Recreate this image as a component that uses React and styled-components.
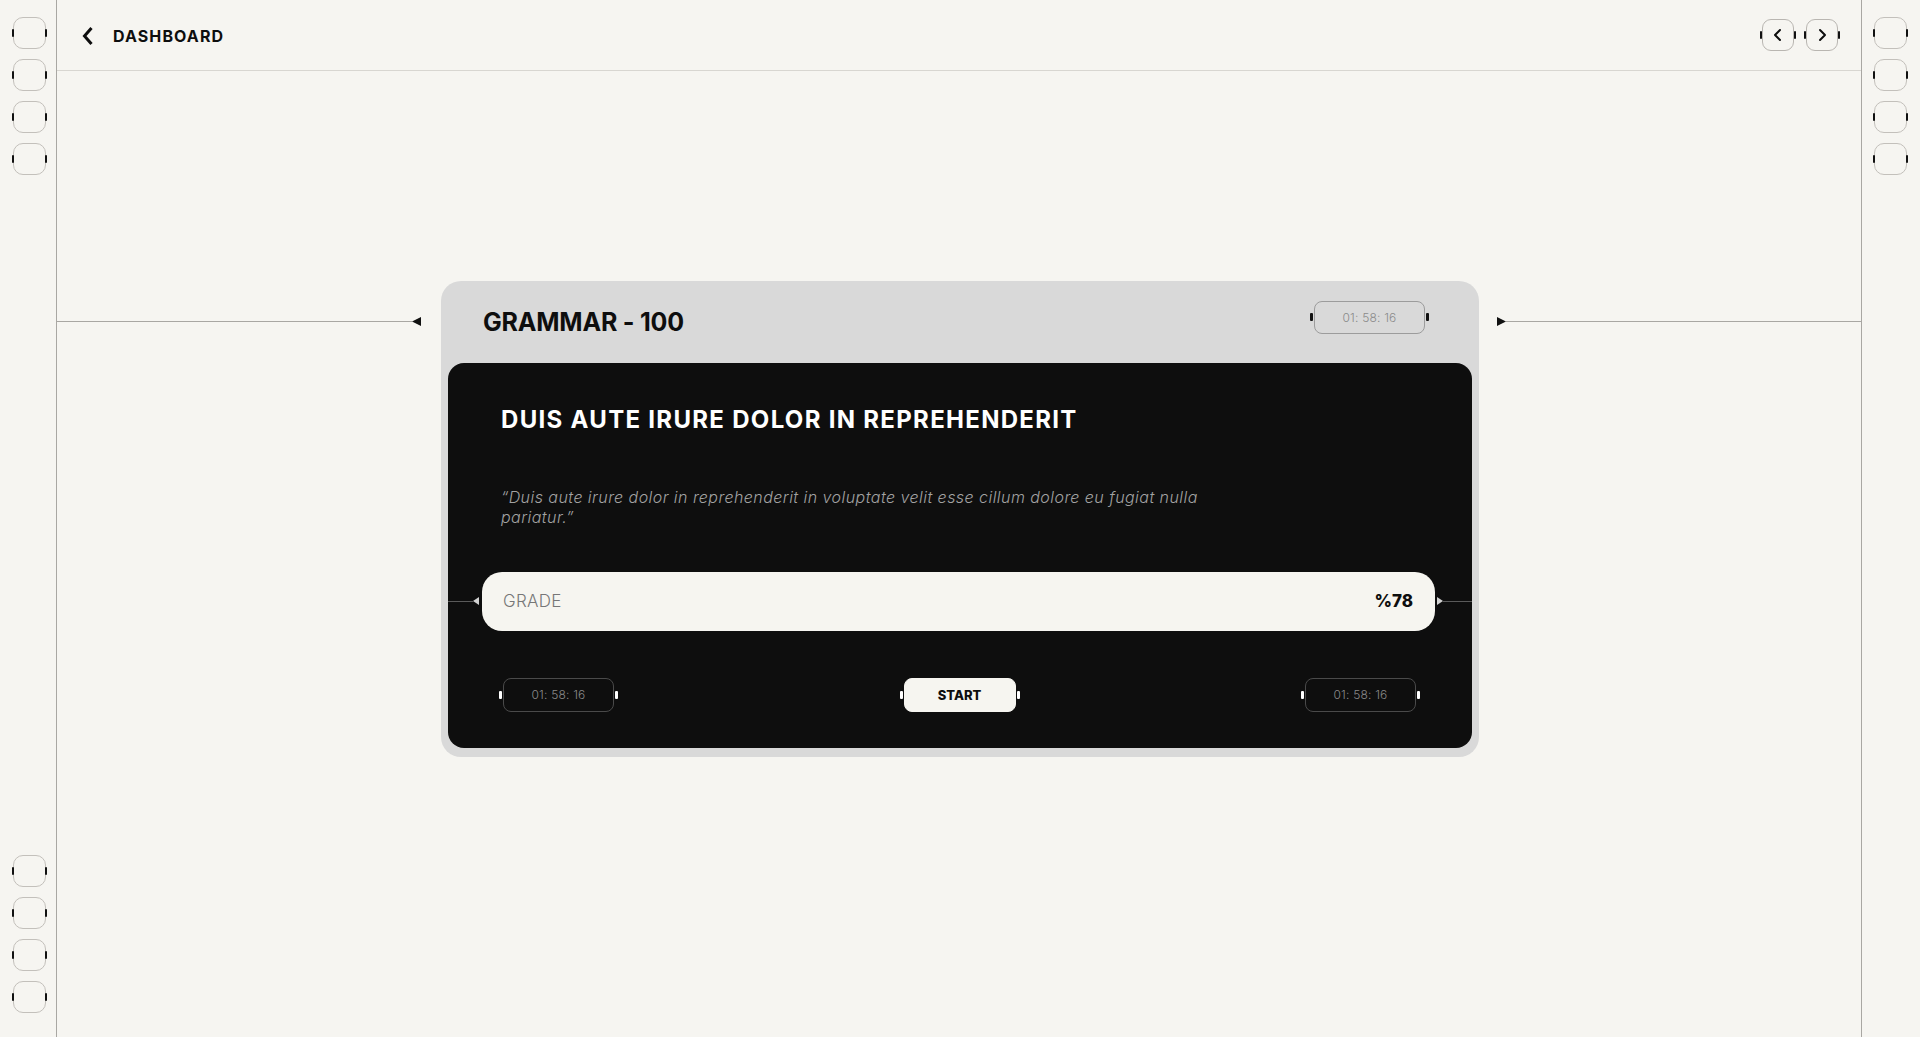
import React from "react";
import styled, { createGlobalStyle } from "styled-components";

const GlobalStyle = createGlobalStyle`
  * {
    box-sizing: border-box;
  }

  html,
  body {
    margin: 0;
    padding: 0;
    background: #f6f5f1;
  }

  body {
    font-family: "Inter", "DejaVu Sans", sans-serif;
    color: #0e0e0e;
  }
`;

const Page = styled.div`
  display: flex;
  height: 100vh;
  overflow: hidden;
`;

const Rail = styled.aside`
  flex-shrink: 0;
  width: ${(p) => (p.$side === "left" ? 57 : 59)}px;
  display: flex;
  flex-direction: column;
  justify-content: space-between;
  padding: 17px 0 24px ${(p) => (p.$side === "left" ? 13 : 12)}px;
  border-${(p) => (p.$side === "left" ? "right" : "left")}: 1px solid #a9a7a3;
`;

const RailGroup = styled.div`
  display: flex;
  flex-direction: column;
  gap: 10px;
`;

// box with the small side marks on left / right
const Ticked = styled.div`
  position: relative;
  display: flex;
  align-items: center;
  justify-content: center;
  width: ${(p) => p.$w}px;
  height: ${(p) => p.$h}px;
  margin-bottom: ${(p) => p.$lift || 0}px;
  border: 1px solid ${(p) => p.$border};
  border-radius: ${(p) => p.$radius || 8}px;
  background: ${(p) => p.$bg || "transparent"};

  &::before,
  &::after {
    content: "";
    position: absolute;
    top: 50%;
    width: ${(p) => p.$tickW || 3}px;
    height: 8px;
    margin-top: -4px;
    border-radius: 1px;
    background: ${(p) => p.$tick};
  }

  &::before {
    left: ${(p) => p.$tickOffset}px;
  }

  &::after {
    right: ${(p) => p.$tickOffset}px;
  }
`;

const Main = styled.main`
  flex: 1;
  min-width: 0;
  display: flex;
  flex-direction: column;
`;

const Header = styled.header`
  flex-shrink: 0;
  height: 71px;
  display: flex;
  align-items: center;
  justify-content: space-between;
  padding: 0 23px 0 25px;
  border-bottom: 1px solid #d8d6d1;
`;

const BackLink = styled.div`
  display: flex;
  align-items: center;
  gap: 19px;
  font-size: 16px;
  font-weight: 700;
  letter-spacing: 1.1px;
  padding-top: 2px;
`;

const NavGroup = styled.div`
  display: flex;
  gap: 12px;
`;

const Stage = styled.section`
  flex: 1;
  display: flex;
  align-items: center;
  padding-bottom: 71px;
`;

const StageRow = styled.div`
  width: 100%;
  display: flex;
  align-items: flex-start;
`;

const Connector = styled.div`
  flex: ${(p) => (p.$width ? `0 0 ${p.$width}px` : 1)};
  height: ${(p) => p.$height}px;
  display: flex;
  align-items: center;
  flex-direction: ${(p) => (p.$side === "left" ? "row" : "row-reverse")};
  padding-${(p) => (p.$side === "left" ? "right" : "left")}: ${(p) => p.$gap}px;
`;

const Line = styled.div`
  flex: 1;
  height: 1px;
  background: ${(p) => p.$color};
`;

const Card = styled.div`
  flex: 0 0 1038px;
  background: #d9d9d9;
  border-radius: 20px;
  padding: 0 7px 9px;
`;

const CardHead = styled.div`
  height: 82px;
  display: flex;
  align-items: center;
  justify-content: space-between;
  padding: 0 47px 0 35px;
`;

const CardTitle = styled.h1`
  margin: 0;
  font-size: 25px;
  font-weight: 700;
  letter-spacing: -0.2px;
`;

const Panel = styled.div`
  background: #0e0e0e;
  border-radius: 16px;
  padding: 42px 0 36px;
`;

const PanelTitle = styled.h2`
  margin: 0 53px;
  font-size: 24px;
  line-height: 29px;
  font-weight: 700;
  letter-spacing: 1.3px;
  color: #ffffff;
`;

const Quote = styled.p`
  margin: 53px 53px 0;
  max-width: 730px;
  font-size: 16px;
  line-height: 20px;
  font-style: italic;
  font-weight: 300;
  letter-spacing: 0.45px;
  color: #a2a2a2;
`;

const GradeRow = styled.div`
  margin-top: 45px;
  display: flex;
  align-items: center;
`;

const GradeBar = styled.div`
  flex: 1;
  height: 59px;
  display: flex;
  align-items: center;
  justify-content: space-between;
  padding: 0 22px 0 21px;
  border-radius: 20px;
  background: #f6f5f0;
  font-size: 17px;
`;

const GradeLabel = styled.span`
  font-weight: 300;
  color: #777;
  letter-spacing: 0.3px;
`;

const GradeValue = styled.span`
  font-weight: 800;
  color: #0e0e0e;
`;

const Controls = styled.div`
  margin-top: 47px;
  display: flex;
  align-items: center;
  justify-content: space-between;
  padding: 0 56px 0 55px;
`;

const TimeText = styled.span`
  font-size: 12px;
  font-weight: 300;
  color: #8a8a8a;
  letter-spacing: 0.2px;
`;

const StartLabel = styled.span`
  font-size: 13px;
  font-weight: 800;
  color: #0e0e0e;
`;

const Arrow = ({ dir, color, w, h }) => (
  <svg width={w} height={h} viewBox={`0 0 ${w} ${h}`} style={{ flexShrink: 0 }}>
    {dir === "left" ? (
      <polygon points={`0,${h / 2} ${w},0 ${w},${h}`} fill={color} />
    ) : (
      <polygon points={`0,0 ${w},${h / 2} 0,${h}`} fill={color} />
    )}
  </svg>
);

const Chevron = ({ dir, size = 14, weight = 2 }) => (
  <svg width={size} height={size} viewBox="0 0 14 14" fill="none">
    <polyline
      points={dir === "left" ? "9,2 4,7 9,12" : "5,2 10,7 5,12"}
      stroke="#0e0e0e"
      strokeWidth={weight}
      strokeLinecap="round"
      strokeLinejoin="round"
    />
  </svg>
);

const RailBox = () => (
  <Ticked $w={33} $h={32} $radius={10} $border="#c3c0bb" $tick="#111" $tickW={2} $tickOffset={-2} />
);

const SideRail = ({ side }) => (
  <Rail $side={side}>
    <RailGroup>
      {[0, 1, 2, 3].map((i) => (
        <RailBox key={i} />
      ))}
    </RailGroup>
    {side === "left" && (
      <RailGroup>
        {[0, 1, 2, 3].map((i) => (
          <RailBox key={i} />
        ))}
      </RailGroup>
    )}
  </Rail>
);

const Timer = ({ dark, lift }) => (
  <Ticked
    $w={111}
    $h={dark ? 34 : 33}
    $radius={8}
    $lift={lift}
    $border={dark ? "#4a4a4a" : "#9c9c9c"}
    $tick={dark ? "#ffffff" : "#111"}
    $tickOffset={-5}
  >
    <TimeText>01: 58: 16</TimeText>
  </Ticked>
);

const App = () => {
  return (
    <>
      <GlobalStyle />
      <Page>
        <SideRail side="left" />

        <Main>
          <Header>
            <BackLink>
              <svg width="12" height="20" viewBox="0 0 12 20" fill="none">
                <polyline
                  points="9.5,2 2.5,10 9.5,18"
                  stroke="#0e0e0e"
                  strokeWidth="3"
                  strokeLinejoin="miter"
                />
              </svg>
              DASHBOARD
            </BackLink>
            <NavGroup>
              <Ticked $w={32} $h={32} $radius={9} $border="#b9b6b1" $tick="#111" $tickW={2} $tickOffset={-3}>
                <Chevron dir="left" />
              </Ticked>
              <Ticked $w={32} $h={32} $radius={9} $border="#b9b6b1" $tick="#111" $tickW={2} $tickOffset={-3}>
                <Chevron dir="right" />
              </Ticked>
            </NavGroup>
          </Header>

          <Stage>
            <StageRow>
              <Connector $side="left" $height={82} $gap={20}>
                <Line $color="#a9a7a3" />
                <Arrow dir="left" color="#111" w={9} h={9} />
              </Connector>

              <Card>
                <CardHead>
                  <CardTitle>GRAMMAR - 100</CardTitle>
                  <Timer lift={9} />
                </CardHead>

                <Panel>
                  <PanelTitle>DUIS AUTE IRURE DOLOR IN REPREHENDERIT</PanelTitle>
                  <Quote>
                    “Duis aute irure dolor in reprehenderit in voluptate velit esse cillum dolore eu fugiat nulla
                    pariatur.”
                  </Quote>

                  <GradeRow>
                    <Connector $side="left" $width={34} $height={59} $gap={3}>
                      <Line $color="#5a5a5a" />
                      <Arrow dir="left" color="#d2d2d2" w={6} h={8} />
                    </Connector>
                    <GradeBar>
                      <GradeLabel>GRADE</GradeLabel>
                      <GradeValue>%78</GradeValue>
                    </GradeBar>
                    <Connector $side="right" $width={37} $height={59} $gap={2}>
                      <Line $color="#5a5a5a" />
                      <Arrow dir="right" color="#d2d2d2" w={6} h={8} />
                    </Connector>
                  </GradeRow>

                  <Controls>
                    <Timer dark />
                    <Ticked
                      $w={112}
                      $h={34}
                      $radius={8}
                      $border="#f6f5f0"
                      $bg="#f6f5f0"
                      $tick="#ffffff"
                      $tickOffset={-5}
                    >
                      <StartLabel>START</StartLabel>
                    </Ticked>
                    <Timer dark />
                  </Controls>
                </Panel>
              </Card>

              <Connector $side="right" $height={82} $gap={18}>
                <Line $color="#a9a7a3" />
                <Arrow dir="right" color="#111" w={9} h={9} />
              </Connector>
            </StageRow>
          </Stage>
        </Main>

        <SideRail side="right" />
      </Page>
    </>
  );
};

export default App;
